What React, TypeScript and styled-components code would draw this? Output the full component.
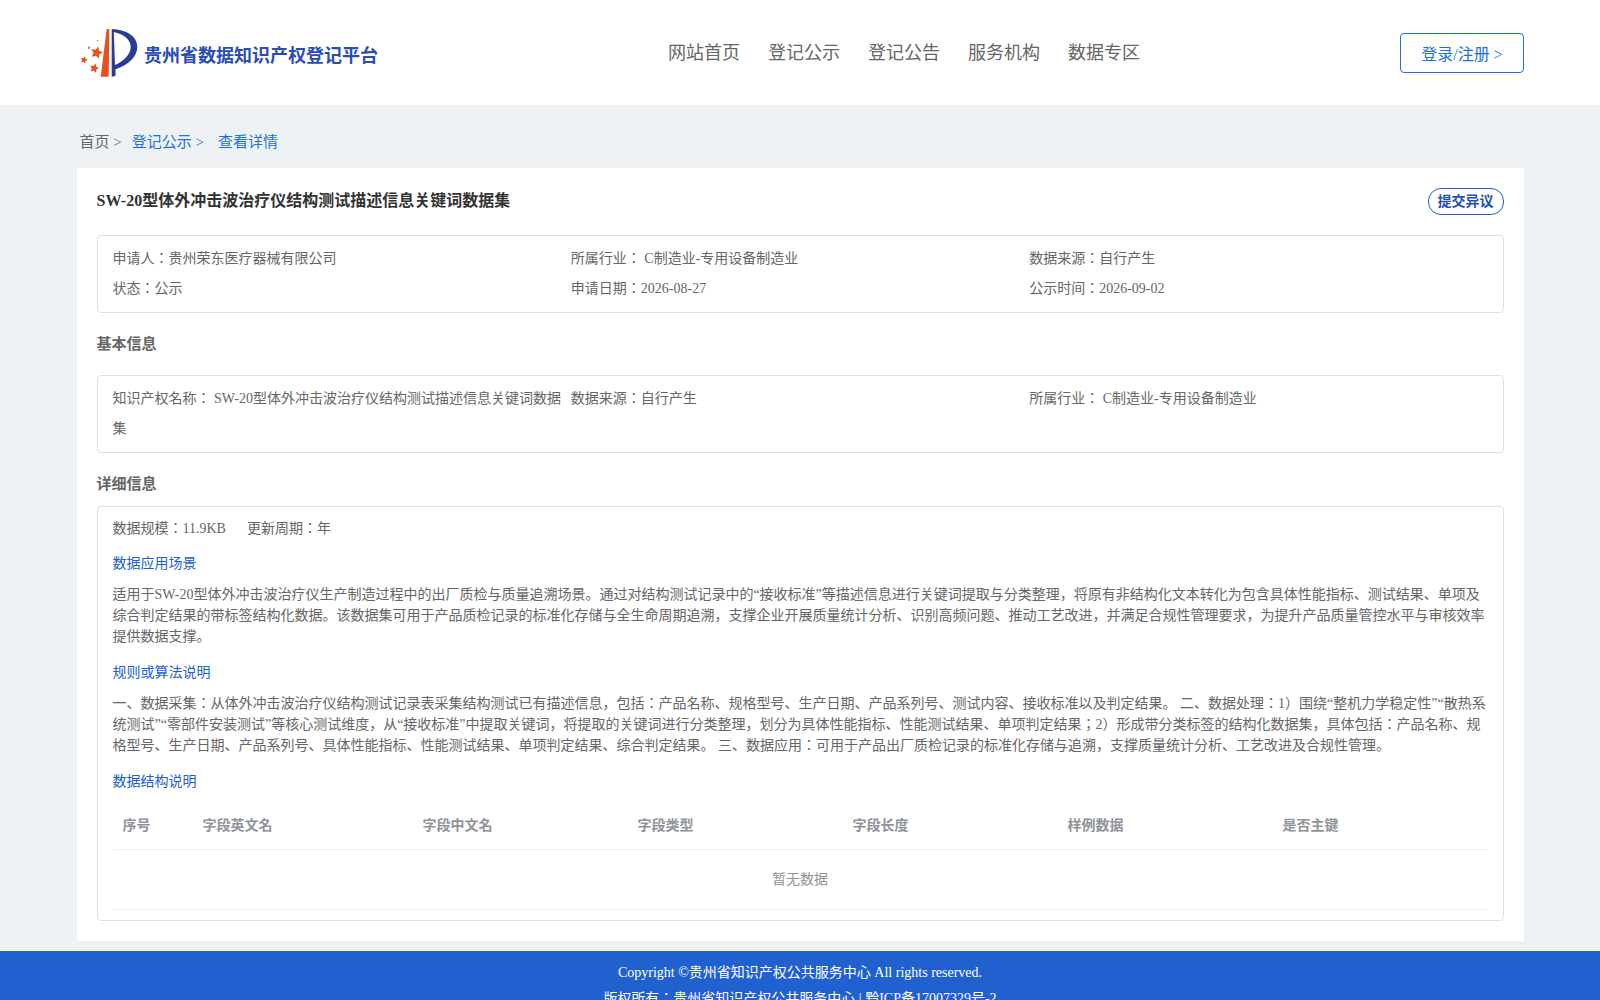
import styled, { createGlobalStyle } from 'styled-components';

const GlobalStyle = createGlobalStyle`
  html, body {
    margin: 0;
    padding: 0;
    background: #eff2f5;
    font-family: "Liberation Serif", "Noto Sans CJK JP", serif;
    font-size: 14px;
    color: #666;
  }
  * {
    box-sizing: border-box;
  }
`;

const Header = styled.header`
  height: 105px;
  background: #fff;
  padding: 0 76px 0 78px;
  display: flex;
  align-items: center;
`;

const Brand = styled.div`
  width: 590px;
  display: flex;
  align-items: center;
  gap: 4px;
`;

const BrandName = styled.span`
  font-size: 18px;
  font-weight: 700;
  color: #2a4db3;
  padding-top: 2px;
`;

const Nav = styled.nav`
  display: flex;
  gap: 28px;
  padding-bottom: 4px;
`;

const NavLink = styled.a`
  font-size: 18px;
  color: #666;
`;

const LoginButton = styled.a`
  margin-left: auto;
  width: 124px;
  height: 40px;
  border: 1px solid #1e6fe4;
  border-radius: 4px;
  color: #1e6fe4;
  font-size: 16px;
  display: flex;
  align-items: center;
  justify-content: center;
`;

const Main = styled.main`
  width: 1447px;
  margin: 0 auto;
`;

const Crumbs = styled.div`
  height: 63px;
  padding: 8px 0 0 3px;
  display: flex;
  align-items: center;
  font-size: 15px;
  color: #666;
`;

const Crumb = styled.span<{ $blue?: boolean; $gap: number }>`
  color: ${(p) => (p.$blue ? '#1e6fe4' : '#666')};
  margin-right: ${(p) => p.$gap}px;
`;

const Card = styled.section`
  background: #fff;
  padding: 20px;
`;

const TitleRow = styled.div`
  display: flex;
  justify-content: space-between;
  align-items: flex-start;
  height: 47px;
`;

const Title = styled.h1`
  margin: 0;
  padding-top: 1px;
  font-size: 16px;
  line-height: 24px;
  font-weight: 700;
  color: #333;
`;

const ObjectButton = styled.a`
  width: 76px;
  height: 27px;
  padding-bottom: 4px;
  border: 1px solid #205fcc;
  border-radius: 13px;
  color: #1f50b5;
  font-size: 14px;
  font-weight: 700;
  display: flex;
  align-items: center;
  justify-content: center;
`;

const Box = styled.div`
  border: 1px solid #dcdfe6;
  border-radius: 4px;
  padding: 0 15px;
`;

const InfoGrid = styled(Box)`
  display: grid;
  grid-template-columns: repeat(3, 1fr);
  padding-top: 8px;
  padding-bottom: 8px;
`;

const InfoItem = styled.div`
  line-height: 30px;
`;

const SectionTitle = styled.h2<{ $height: number; $top: number; $bottom: number }>`
  margin: 0;
  font-size: 15px;
  font-weight: 700;
  color: #666;
  height: ${(p) => p.$height}px;
  padding: ${(p) => p.$top}px 0 ${(p) => p.$bottom}px;
  display: flex;
  align-items: center;
`;

const DetailBox = styled(Box)`
  padding-bottom: 10px;
`;

const Stats = styled.div`
  display: flex;
  gap: 21px;
  line-height: 40px;
  padding-top: 2px;
  margin-bottom: 4px;
  height: 42px;
`;

const SubTitle = styled.div`
  color: #205fcc;
  line-height: 21px;
  margin-bottom: 10px;
`;

const Paragraph = styled.p`
  margin: 0 0 15px;
  line-height: 21px;
  color: #666;
`;

const TableRow = styled.div`
  display: grid;
  grid-template-columns: 80px 220px repeat(5, 215px);
  height: 48px;
  padding-bottom: 4px;
  align-items: center;
  border-bottom: 1px solid #ebeef5;
`;

const HeadCell = styled.div`
  padding-left: 10px;
  font-weight: 700;
  color: #909399;
`;

const EmptyRow = styled.div`
  height: 60px;
  padding-bottom: 3px;
  display: flex;
  align-items: center;
  justify-content: center;
  color: #909399;
  border-bottom: 1px solid #ebeef5;
`;

const Footer = styled.footer`
  margin-top: 10px;
  background: #2161cf;
  color: #fff;
  text-align: center;
  padding: 9px 0 12px;
  line-height: 26px;
`;

const star = (cx: number, cy: number, r: number) =>
  Array.from({ length: 10 }, (_, i) => {
    const radius = i % 2 === 0 ? r : r * 0.48;
    const angle = -Math.PI / 2 + 0.25 + (i * Math.PI) / 5;
    return `${(cx + radius * Math.cos(angle)).toFixed(2)},${(cy + radius * Math.sin(angle)).toFixed(2)}`;
  }).join(' ');

const Logo = () => (
  <svg width="62" height="56" viewBox="0 0 62 56">
    <path d="M28.7 4 L31.3 4 L30.7 51.7 L22.7 51.7 Z" fill="#e8501f" />
    <path
      d="M33.7 4 L33.7 51.7 L37.5 51 L37.5 44.3 C50 40 59.3 32 59.3 21.7 C59.3 11 48 4.5 33.7 4 Z M35.8 7 C45 9 52.7 14 52.7 21.7 C52.7 29 46 36 37 40 Z"
      fill="#2b3a93"
      fillRule="evenodd"
    />
    <polygon points={star(18.7, 27.7, 6.5)} fill="#e8501f" />
    <polygon points={star(6, 35, 3.8)} fill="#e8501f" />
    <polygon points={star(16.3, 43.3, 5)} fill="#e8501f" />
    <circle cx="11" cy="22.7" r="1.3" fill="#ec7a52" />
    <circle cx="19.3" cy="15.7" r="0.8" fill="#ec7a52" />
  </svg>
);

const infoRows = [
  '申请人：贵州荣东医疗器械有限公司',
  '所属行业： C制造业-专用设备制造业',
  '数据来源：自行产生',
  '状态：公示',
  '申请日期：2026-08-27',
  '公示时间：2026-09-02',
];

const basicRows = [
  '知识产权名称： SW-20型体外冲击波治疗仪结构测试描述信息关键词数据集',
  '数据来源：自行产生',
  '所属行业： C制造业-专用设备制造业',
];

const columns = ['序号', '字段英文名', '字段中文名', '字段类型', '字段长度', '样例数据', '是否主键'];

const App = () => {
  return (
    <>
      <GlobalStyle />
      <Header>
        <Brand>
          <Logo />
          <BrandName>贵州省数据知识产权登记平台</BrandName>
        </Brand>
        <Nav>
          <NavLink>网站首页</NavLink>
          <NavLink>登记公示</NavLink>
          <NavLink>登记公告</NavLink>
          <NavLink>服务机构</NavLink>
          <NavLink>数据专区</NavLink>
        </Nav>
        <LoginButton>登录/注册 &gt;</LoginButton>
      </Header>
      <Main>
        <Crumbs>
          <Crumb $gap={10}>首页 &gt;</Crumb>
          <Crumb $blue $gap={14}>登记公示 &gt;</Crumb>
          <Crumb $blue $gap={0}>查看详情</Crumb>
        </Crumbs>
        <Card>
          <TitleRow>
            <Title>SW-20型体外冲击波治疗仪结构测试描述信息关键词数据集</Title>
            <ObjectButton>提交异议</ObjectButton>
          </TitleRow>
          <InfoGrid>
            {infoRows.map((text) => (
              <InfoItem key={text}>{text}</InfoItem>
            ))}
          </InfoGrid>
          <SectionTitle $height={62} $top={0} $bottom={3}>基本信息</SectionTitle>
          <InfoGrid>
            {basicRows.map((text) => (
              <InfoItem key={text}>{text}</InfoItem>
            ))}
          </InfoGrid>
          <SectionTitle $height={53} $top={6} $bottom={0}>详细信息</SectionTitle>
          <DetailBox>
            <Stats>
              <span>数据规模：11.9KB</span>
              <span>更新周期：年</span>
            </Stats>
            <SubTitle>数据应用场景</SubTitle>
            <Paragraph>
              适用于SW-20型体外冲击波治疗仪生产制造过程中的出厂质检与质量追溯场景。通过对结构测试记录中的“接收标准”等描述信息进行关键词提取与分类整理，将原有非结构化文本转化为包含具体性能指标、测试结果、单项及综合判定结果的带标签结构化数据。该数据集可用于产品质检记录的标准化存储与全生命周期追溯，支撑企业开展质量统计分析、识别高频问题、推动工艺改进，并满足合规性管理要求，为提升产品质量管控水平与审核效率提供数据支撑。
            </Paragraph>
            <SubTitle>规则或算法说明</SubTitle>
            <Paragraph>
              一、数据采集：从体外冲击波治疗仪结构测试记录表采集结构测试已有描述信息，包括：产品名称、规格型号、生产日期、产品系列号、测试内容、接收标准以及判定结果。 二、数据处理：1）围绕“整机力学稳定性”“散热系统测试”“零部件安装测试”等核心测试维度，从“接收标准”中提取关键词，将提取的关键词进行分类整理，划分为具体性能指标、性能测试结果、单项判定结果；2）形成带分类标签的结构化数据集，具体包括：产品名称、规格型号、生产日期、产品系列号、具体性能指标、性能测试结果、单项判定结果、综合判定结果。 三、数据应用：可用于产品出厂质检记录的标准化存储与追溯，支撑质量统计分析、工艺改进及合规性管理。
            </Paragraph>
            <SubTitle>数据结构说明</SubTitle>
            <div>
              <TableRow>
                {columns.map((name) => (
                  <HeadCell key={name}>{name}</HeadCell>
                ))}
              </TableRow>
              <EmptyRow>暂无数据</EmptyRow>
            </div>
          </DetailBox>
        </Card>
      </Main>
      <Footer>
        <div>Copyright ©贵州省知识产权公共服务中心 All rights reserved.</div>
        <div>版权所有：贵州省知识产权公共服务中心 | 黔ICP备17007329号-2</div>
      </Footer>
    </>
  );
};

export default App;
